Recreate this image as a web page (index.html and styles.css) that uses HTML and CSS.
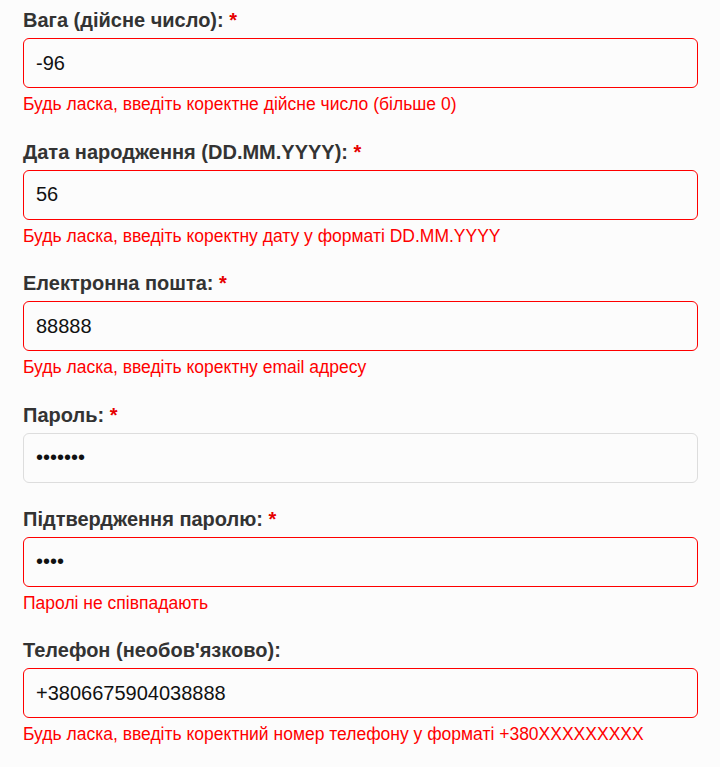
FILE: index.html
```html
<!DOCTYPE html>
<html lang="uk">
<head>
<meta charset="utf-8">
<link rel="stylesheet" href="styles.css">
</head>
<body>
<form class="form">
  <div class="group">
    <label class="label">Вага (дійсне число): <span class="req">*</span></label>
    <input class="input invalid" type="text" value="-96">
    <div class="error">Будь ласка, введіть коректне дійсне число (більше 0)</div>
  </div>
  <div class="group">
    <label class="label">Дата народження (DD.MM.YYYY): <span class="req">*</span></label>
    <input class="input invalid" type="text" value="56">
    <div class="error">Будь ласка, введіть коректну дату у форматі DD.MM.YYYY</div>
  </div>
  <div class="group">
    <label class="label">Електронна пошта: <span class="req">*</span></label>
    <input class="input invalid" type="text" value="88888">
    <div class="error">Будь ласка, введіть коректну email адресу</div>
  </div>
  <div class="group">
    <label class="label">Пароль: <span class="req">*</span></label>
    <input class="input" type="password" value="1234567">
  </div>
  <div class="group">
    <label class="label">Підтвердження паролю: <span class="req">*</span></label>
    <input class="input invalid" type="password" value="1234">
    <div class="error">Паролі не співпадають</div>
  </div>
  <div class="group">
    <label class="label">Телефон (необов'язково):</label>
    <input class="input invalid" type="text" value="+3806675904038888">
    <div class="error">Будь ласка, введіть коректний номер телефону у форматі +380XXXXXXXXX</div>
  </div>
</form>
</body>
</html>
```
FILE: styles.css
```css
html, body {
  margin: 0;
  background: #fcfcfc;
}
body {
  padding: 9px 22px 0 23px;
  font-family: "Liberation Sans", Arial, sans-serif;
}
.form {
  display: flex;
  flex-direction: column;
}
.group {
  display: flex;
  flex-direction: column;
  margin-bottom: 25px;
}
.label {
  font-size: 20px;
  font-weight: bold;
  color: #333;
  line-height: 23px;
  margin-bottom: 6px;
}
.req {
  color: #e60000;
}
.input {
  box-sizing: border-box;
  height: 50px;
  width: 100%;
  padding: 0 12px;
  font-family: "Liberation Sans", Arial, sans-serif;
  font-size: 20px;
  color: #111;
  background: #fcfcfc;
  border: 1px solid #ddd;
  border-radius: 6px;
  outline: none;
}
.input.invalid {
  border-color: #f00;
}
.error {
  margin-top: 6px;
  font-size: 17.5px;
  line-height: 21.5px;
  color: #f00;
}
```
